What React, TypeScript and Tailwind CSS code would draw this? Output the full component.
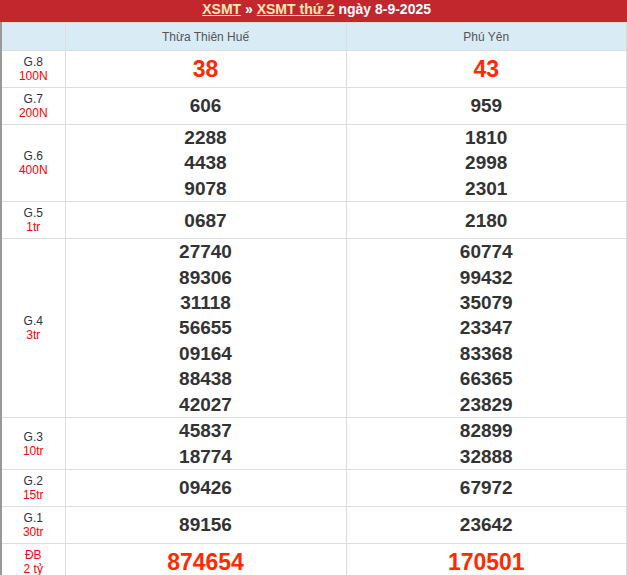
const rows: { g: string; p: string; h: string; a: string[]; b: string[]; big?: boolean; db?: boolean }[] = [
  { g: 'G.8', p: '100N', h: 'h-[37px]', a: ['38'], b: ['43'], big: true },
  { g: 'G.7', p: '200N', h: 'h-[37px]', a: ['606'], b: ['959'] },
  { g: 'G.6', p: '400N', h: 'h-[76px]', a: ['2288', '4438', '9078'], b: ['1810', '2998', '2301'] },
  { g: 'G.5', p: '1tr', h: 'h-[37px]', a: ['0687'], b: ['2180'] },
  { g: 'G.4', p: '3tr', h: 'h-[177px]', a: ['27740', '89306', '31118', '56655', '09164', '88438', '42027'], b: ['60774', '99432', '35079', '23347', '83368', '66365', '23829'] },
  { g: 'G.3', p: '10tr', h: 'h-[52px]', a: ['45837', '18774'], b: ['82899', '32888'] },
  { g: 'G.2', p: '15tr', h: 'h-[37px]', a: ['09426'], b: ['67972'] },
  { g: 'G.1', p: '30tr', h: 'h-[37px]', a: ['89156'], b: ['23642'] },
  { g: 'ĐB', p: '2 tỷ', h: 'h-[37px]', a: ['874654'], b: ['170501'], big: true, db: true },
];

function Cell({ nums, big }: { nums: string[]; big?: boolean }) {
  return (
    <td className="border border-[#ddd] text-center align-middle">
      {nums.map((n) => (
        <div key={n} className={big ? 'text-[23px] font-bold text-[#ff2a00] leading-[26px]' : 'text-[19px] font-bold text-[#333] leading-[25.4px]'}>{n}</div>
      ))}
    </td>
  );
}

export default function App() {
  return (
    <div className="w-[627px] h-[575px] overflow-hidden bg-white" style={{ fontFamily: '"Liberation Sans", Arial, sans-serif' }}>
      <div className="h-[22px] bg-[#c1272d] text-white font-bold text-[14px] leading-[18px] text-right pr-[196px]">
        <span className="underline text-[#ffe9b0]">XSMT</span> » <span className="underline text-[#ffe9b0]">XSMT thứ 2</span> ngày 8-9-2025
      </div>
      <table className="w-[627px] border-collapse border-l-2 border-l-[#999] table-fixed">
        <colgroup>
          <col className="w-[64px]" />
          <col className="w-[281px]" />
          <col />
        </colgroup>
        <tbody>
          <tr className="h-[28px] bg-[#d9ebf5] text-[12px] text-[#555]">
            <td className="border border-[#ddd]"></td>
            <td className="border border-[#ddd] text-center">Thừa Thiên Huế</td>
            <td className="border border-[#ddd] text-center">Phú Yên</td>
          </tr>
          {rows.map((r) => (
            <tr key={r.g} className={r.h}>
              <td className="border border-[#ddd] text-center text-[12px] leading-[14px]">
                <div className={r.db ? 'text-[#f00]' : 'text-[#333]'}>{r.g}</div>
                <div className="text-[#f00]">{r.p}</div>
              </td>
              <Cell nums={r.a} big={r.big} />
              <Cell nums={r.b} big={r.big} />
            </tr>
          ))}
        </tbody>
      </table>
    </div>
  );
}
